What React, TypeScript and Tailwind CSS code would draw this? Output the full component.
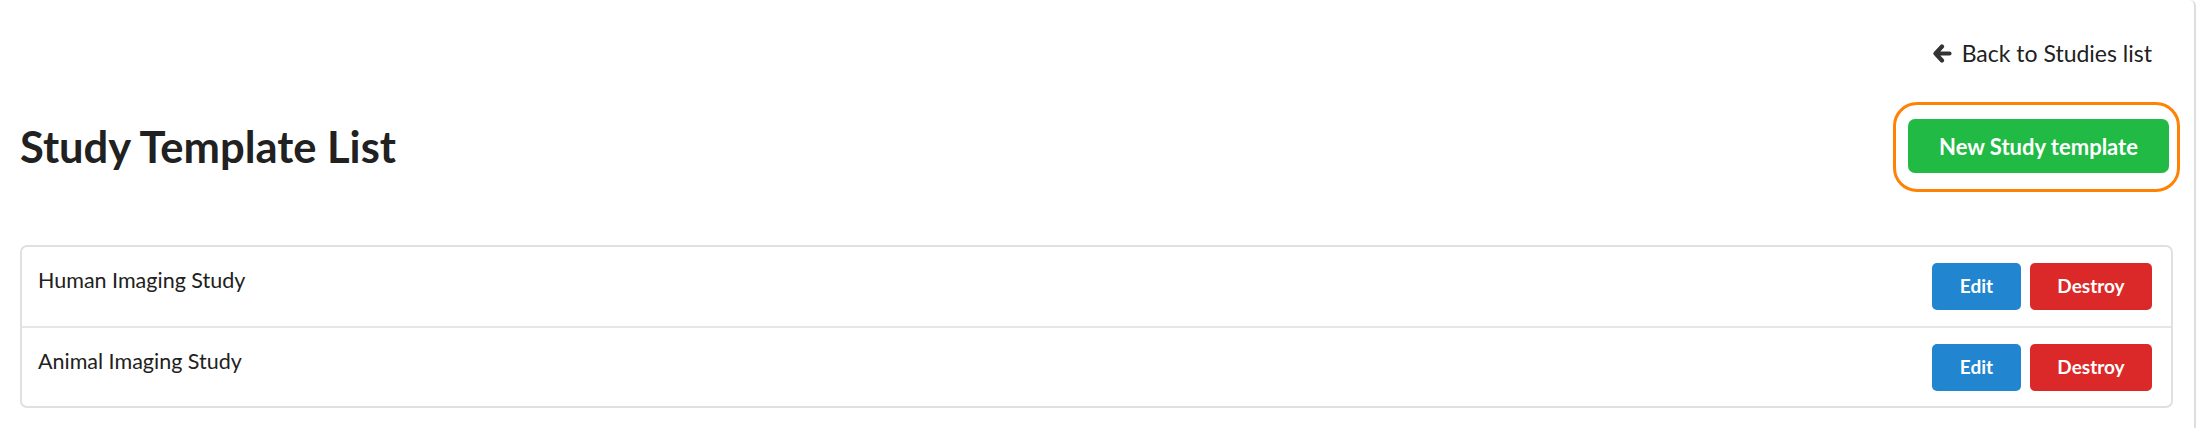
import React from "react";

const rows = ["Human Imaging Study", "Animal Imaging Study"];

function ArrowLeft() {
  return (
    <svg width="19" height="19" viewBox="0 0 19 19" className="text-[#333333]">
      <path d="M9 2.5 L2.5 9.5 L9 16.5 M2.5 9.5 L16.5 9.5" fill="none" stroke="currentColor" strokeWidth="4.2" strokeLinecap="round" strokeLinejoin="round" />
    </svg>
  );
}

export default function App() {
  return (
    <div className="w-full h-[428px] bg-white flex" style={{ fontFamily: "Lato, 'Noto Sans', sans-serif" }}>
      <div className="w-[2196px] h-full border-r-2 border-[#dedede] rounded-tr-[6px] pl-[20px] pr-[21px]">
        <div className="flex justify-end pt-[39px] pr-[21px]">
          <a className="flex items-center gap-[10px] text-[23px] leading-[28px] text-[#212121]">
            <ArrowLeft />
            <span>Back to Studies list</span>
          </a>
        </div>
        <div className="flex items-center justify-between mt-[52px] pr-[4px]">
          <h1 className="text-[43.5px] leading-[52px] font-bold text-[#212121]">Study Template List</h1>
          <div className="relative">
            <button className="h-[54px] w-[261px] rounded-[7px] bg-[#21ba45] text-white font-bold text-[22px]">
              New Study template
            </button>
            <div className="absolute left-[-15px] right-[-11px] top-[-17px] bottom-[-19px] border-[3px] border-[#ff8205] rounded-[24px] pointer-events-none" />
          </div>
        </div>
        <div className="mt-[72px] border-2 border-[#e0e0e0] rounded-[7px]">
          {rows.map((r, i) => (
            <div
              key={r}
              className={`flex items-start justify-between pl-[16px] pr-[19px] pt-[16px] ${i > 0 ? "border-t-2 border-[#e6e6e6] pb-[15px]" : "pb-[16px]"}`}
            >
              <span className="text-[21.5px] leading-[34px] text-[#212121]">{r}</span>
              <div className="flex gap-[9px]">
                <button className="h-[47px] w-[89px] rounded-[5px] bg-[#2185d0] text-white font-bold text-[19px]">Edit</button>
                <button className="h-[47px] w-[122px] rounded-[5px] bg-[#db2828] text-white font-bold text-[19px]">Destroy</button>
              </div>
            </div>
          ))}
        </div>
      </div>
    </div>
  );
}
